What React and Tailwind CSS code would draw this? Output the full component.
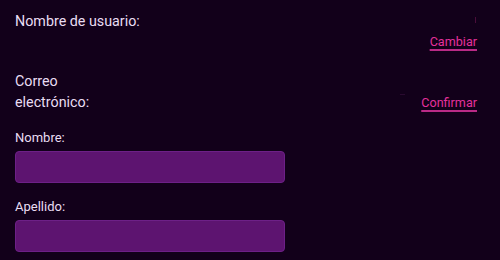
export default function App() {
  return (
    <div className="w-[500px] h-[260px] overflow-hidden bg-[#12001a] text-[#e9ddf3] font-['Roboto','Liberation_Sans',sans-serif]">
      <div className="pl-[15px] pr-[23px] pt-[11px]">
        {/* Username row */}
        <div className="flex justify-between items-start">
          <span className="text-[14.3px] leading-[21px]">Nombre de usuario:</span>
          <div className="flex flex-col items-end">
            <span className="block w-px h-[6px] mt-[6px] mr-px bg-[#4a0d3a]"></span>
            <a
              href="#"
              className="mt-[9px] text-[12.6px] leading-[20px] text-[#e4309c] underline decoration-2 underline-offset-[3px] decoration-[#b92a86]"
            >
              Cambiar
            </a>
          </div>
        </div>

        {/* Email row */}
        <div className="flex justify-between items-end mt-[19px]">
          <span className="w-[110px] text-[14.3px] leading-[21px]">
            Correo electrónico:
          </span>
          <div className="flex items-end">
            <span className="block w-[5px] h-px mb-[18px] mr-[16px] bg-[#2a0a30]"></span>
            <a
              href="#"
              className="text-[12.6px] leading-[20px] text-[#e4309c] underline decoration-2 underline-offset-[3px] decoration-[#b92a86]"
            >
              Confirmar
            </a>
          </div>
        </div>

        {/* Name fields */}
        <div className="mt-[16px] flex flex-col">
          <label className="text-[13px] leading-[18px] mb-[4px]">Nombre:</label>
          <input
            type="text"
            className="w-[270px] h-[32px] rounded-[4px] bg-[#5d1470] border border-[#6d2087] outline-none"
          />
          <label className="text-[13px] leading-[18px] mt-[15px] mb-[4px]">Apellido:</label>
          <input
            type="text"
            className="w-[270px] h-[32px] rounded-[4px] bg-[#5d1470] border border-[#6d2087] outline-none"
          />
        </div>
      </div>
    </div>
  );
}
